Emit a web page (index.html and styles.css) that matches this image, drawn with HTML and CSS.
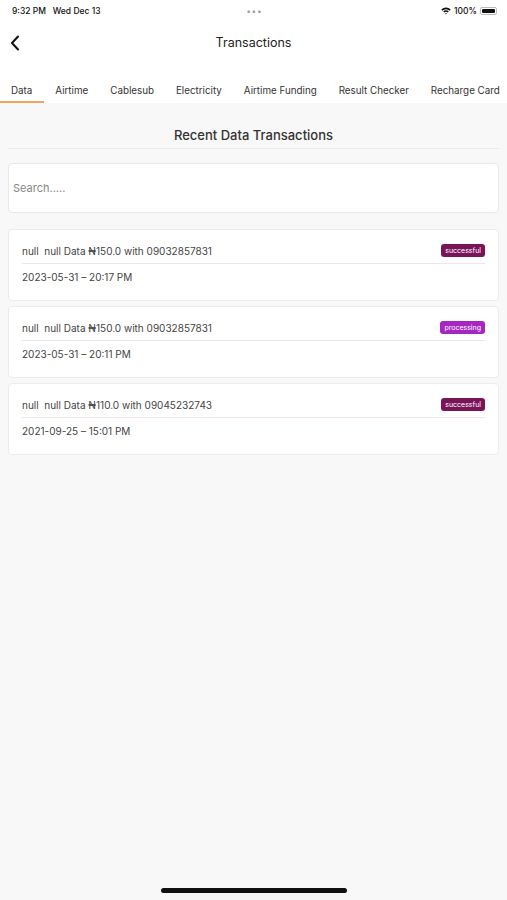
FILE: index.html
```html
<!DOCTYPE html>
<html lang="en">
<head>
    <meta charset="UTF-8">
    <meta name="viewport" content="width=device-width, initial-scale=1.0">
    <title>Transactions</title>
    <link rel="stylesheet" href="styles.css">
</head>
<body>
    <div class="top">
        <div class="status">
            <div class="status-left">9:32 PM&nbsp;&nbsp;&nbsp;Wed Dec 13</div>
            <div class="status-dots">&bull;&bull;&bull;</div>
            <div class="status-right">
                <svg width="10" height="8" viewBox="0 0 10 8">
                    <path d="M0.3 2.6 A6.5 6.5 0 0 1 9.7 2.6 L8.6 3.7 A5 5 0 0 0 1.4 3.7 Z" fill="#111"/>
                    <path d="M2.2 4.5 A3.8 3.8 0 0 1 7.8 4.5 L6.7 5.6 A2.3 2.3 0 0 0 3.3 5.6 Z" fill="#111"/>
                    <path d="M4.1 6.4 A1.3 1.3 0 0 1 5.9 6.4 L5 7.5 Z" fill="#111"/>
                </svg>
                <span>100%</span>
                <div class="battery"><div class="battery-fill"></div></div>
            </div>
        </div>

        <div class="header">
            <svg class="back" width="10" height="16" viewBox="0 0 10 16">
                <path d="M8 1.5 L2 8 L8 14.5" fill="none" stroke="#111" stroke-width="2" stroke-linecap="round" stroke-linejoin="round"/>
            </svg>
            <div class="title">Transactions</div>
        </div>

        <div class="tabs">
            <div class="tab active">Data</div>
            <div class="tab">Airtime</div>
            <div class="tab">Cablesub</div>
            <div class="tab">Electricity</div>
            <div class="tab">Airtime Funding</div>
            <div class="tab">Result Checker</div>
            <div class="tab">Recharge Card</div>
        </div>
    </div>

    <div class="content">
        <div class="section-title">Recent Data Transactions</div>

        <div class="search">Search.....</div>

        <div class="card">
            <div class="card-row">
                <span>null&nbsp; null Data &#8358;150.0 with 09032857831</span>
                <span class="badge success">successful</span>
            </div>
            <div class="card-date">2023-05-31 &ndash; 20:17 PM</div>
        </div>

        <div class="card">
            <div class="card-row">
                <span>null&nbsp; null Data &#8358;150.0 with 09032857831</span>
                <span class="badge processing">processing</span>
            </div>
            <div class="card-date">2023-05-31 &ndash; 20:11 PM</div>
        </div>

        <div class="card">
            <div class="card-row">
                <span>null&nbsp; null Data &#8358;110.0 with 09045232743</span>
                <span class="badge success">successful</span>
            </div>
            <div class="card-date">2021-09-25 &ndash; 15:01 PM</div>
        </div>
    </div>

    <div class="home-bar"></div>
</body>
</html>
```

FILE: styles.css
```css
*{
    box-sizing: border-box;
    margin: 0;
}
body{
    font-family: Inter, 'Noto Sans', 'Liberation Sans', sans-serif;
    background-color: #f8f8f8;
    color: #222;
    height: 900px;
    position: relative;
    overflow: hidden;
}
.top{
    background-color: white;
}
.status{
    height: 22px;
    display: flex;
    align-items: center;
    justify-content: space-between;
    padding: 0 10px 0 12px;
    font-size: 8.5px;
    font-weight: 500;
    color: #111;
}
.status-left{
    width: 120px;
}
.status-dots{
    color: #999;
    font-size: 8px;
    letter-spacing: 1px;
}
.status-right{
    width: 120px;
    display: flex;
    align-items: center;
    justify-content: flex-end;
    gap: 3px;
}
.battery{
    width: 17px;
    height: 8px;
    border: 1px solid #bbb;
    border-radius: 2px;
    padding: 1px;
}
.battery-fill{
    background-color: #111;
    height: 100%;
    border-radius: 1px;
}
.header{
    height: 40px;
    display: flex;
    align-items: center;
    justify-content: center;
    position: relative;
}
.back{
    position: absolute;
    left: 10px;
    top: 13px;
}
.title{
    font-size: 12.5px;
    color: #222;
}
.tabs{
    display: flex;
    margin-top: 18px;
    white-space: nowrap;
}
.tab{
    padding: 5px 11px 5px;
    font-size: 9.8px;
    color: #333;
    border-bottom: 2px solid transparent;
}
.tab:first-child{
    padding-right: 12px;
}
.tab.active{
    border-bottom-color: #f0a45c;
}
.content{
    padding: 0 8px;
}
.section-title{
    text-align: center;
    font-size: 13px;
    font-weight: 500;
    color: #333;
    padding: 24px 0 5px;
    border-bottom: 1px solid #ececec;
}
.search{
    margin-top: 14px;
    height: 50px;
    background-color: white;
    border: 1px solid #e8e8e8;
    border-radius: 4px;
    display: flex;
    align-items: center;
    padding-left: 4px;
    font-size: 11px;
    color: #888;
}
.card{
    background-color: white;
    border: 1px solid #ececec;
    border-radius: 4px;
    padding: 14px 13px 17px;
    margin-top: 5px;
}
.search + .card{
    margin-top: 16px;
}
.card-row{
    display: flex;
    justify-content: space-between;
    align-items: center;
    font-size: 10px;
    color: #444;
    padding-bottom: 6px;
    border-bottom: 1px solid #f0e4f0;
}
.card-date{
    font-size: 10px;
    color: #444;
    padding-top: 7px;
}
.badge{
    font-size: 7px;
    color: white;
    padding: 2px 4px;
    border-radius: 3px;
}
.badge.success{
    background-color: #7a1458;
}
.badge.processing{
    background-color: #a626c4;
}
.home-bar{
    position: absolute;
    left: 161px;
    top: 888px;
    width: 186px;
    height: 5px;
    border-radius: 3px;
    background-color: #111;
}
```
